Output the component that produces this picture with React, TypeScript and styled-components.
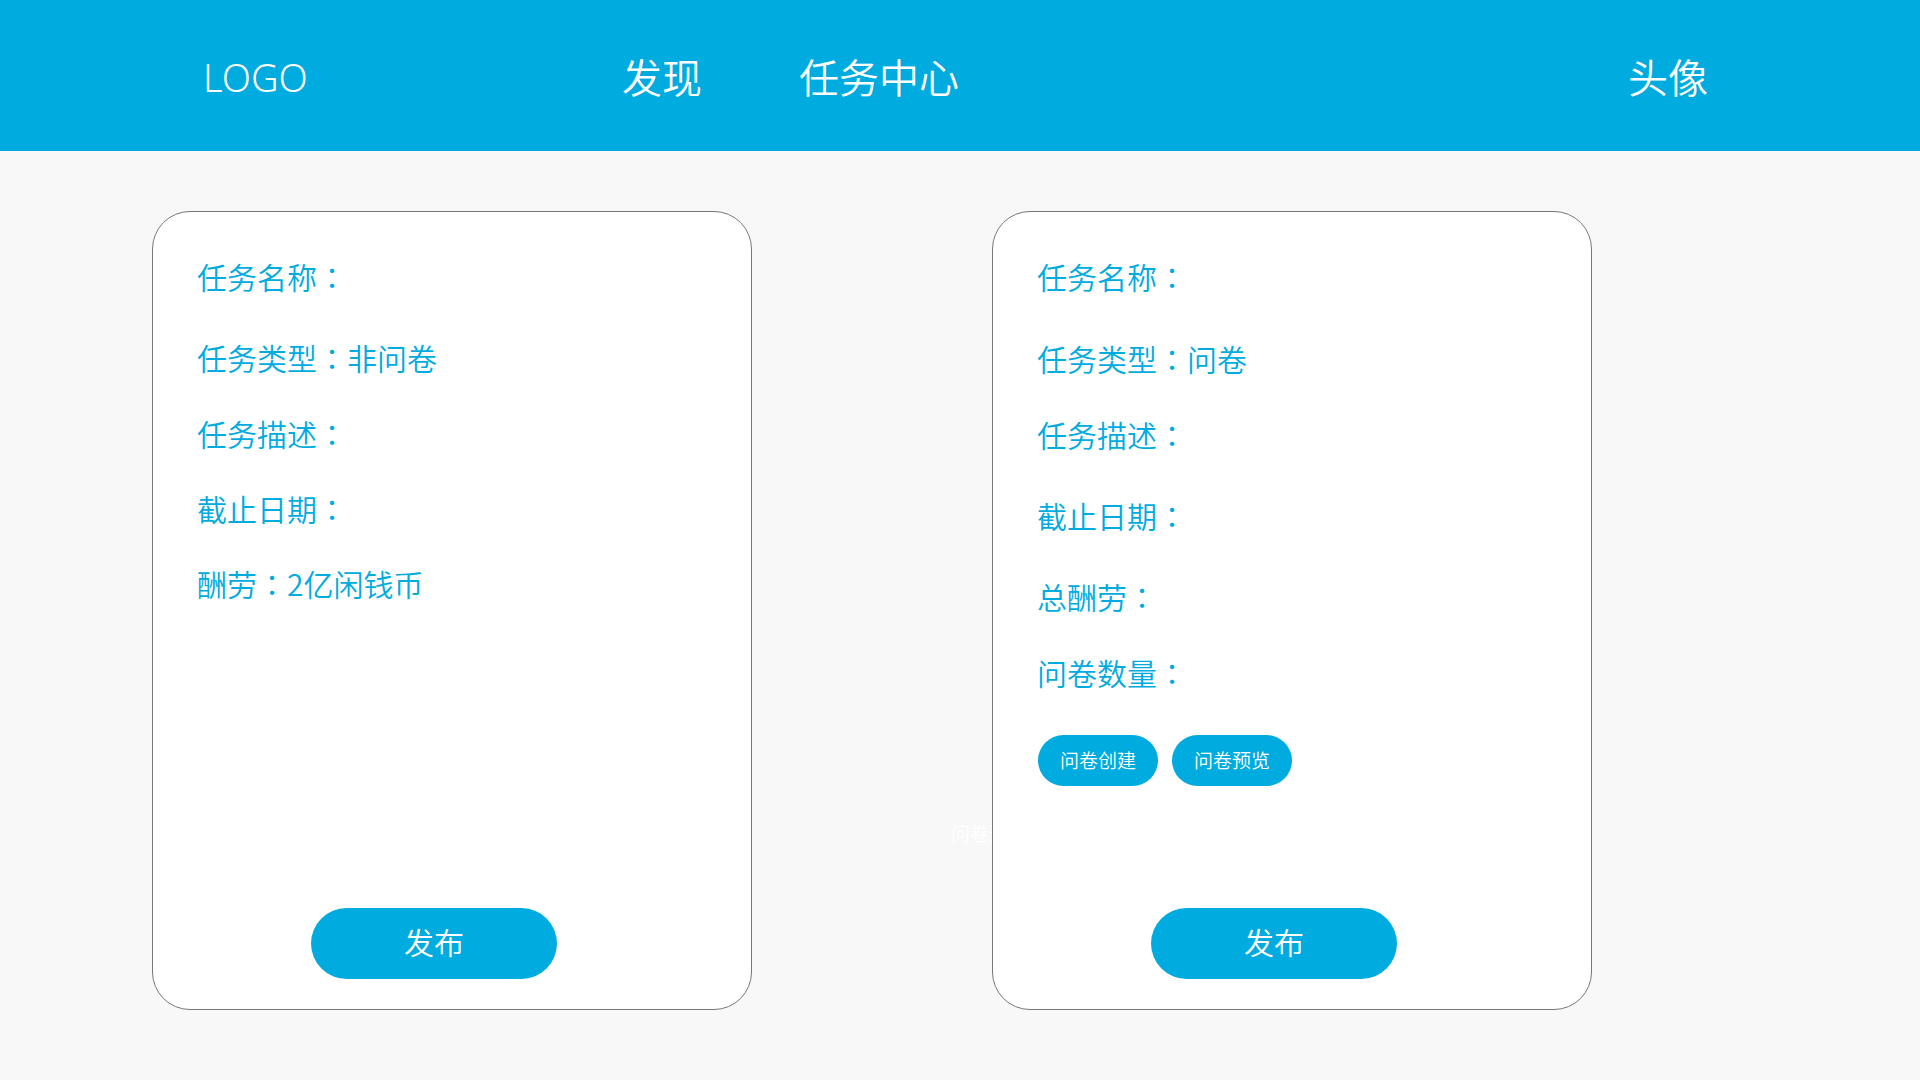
import styled, { createGlobalStyle } from "styled-components";

const GlobalStyle = createGlobalStyle`
  html, body {
    margin: 0;
    padding: 0;
    background: #f8f8f8;
  }
  body {
    font-family: "Noto Sans", "Noto Sans CJK SC", sans-serif;
  }
`;

const BLUE = "#00abdf";

interface Field {
  label: string;
  value?: string;
  mt: number;
}

const leftFields: Field[] = [
  { label: "任务名称", mt: 0 },
  { label: "任务类型", value: "非问卷", mt: 41 },
  { label: "任务描述", mt: 36 },
  { label: "截止日期", mt: 35 },
  { label: "酬劳", value: "2亿闲钱币", mt: 35 },
];

const rightFields: Field[] = [
  { label: "任务名称", mt: 0 },
  { label: "任务类型", value: "问卷", mt: 42 },
  { label: "任务描述", mt: 36 },
  { label: "截止日期", mt: 41 },
  { label: "总酬劳", mt: 41 },
  { label: "问卷数量", mt: 36 },
];

function TaskCard({ fields, survey }: { fields: Field[]; survey?: boolean }) {
  return (
    <Card>
      {fields.map((f) => (
        <Row key={f.label} $mt={f.mt}>
          {f.label}
          <Colon>：</Colon>
          {f.value}
        </Row>
      ))}
      {survey && (
        <SmallActions>
          <SmallButton>问卷创建</SmallButton>
          <SmallButton>问卷预览</SmallButton>
        </SmallActions>
      )}
      <PublishButton>发布</PublishButton>
    </Card>
  );
}

export default function App() {
  return (
    <>
      <GlobalStyle />
      <Header>
        <Logo>LOGO</Logo>
        <Nav>
          <NavItem>发现</NavItem>
          <NavItem>任务中心</NavItem>
        </Nav>
        <Avatar>头像</Avatar>
      </Header>
      <Main>
        <TaskCard fields={leftFields} />
        <TaskCard fields={rightFields} survey />
        <GhostText>问卷预览</GhostText>
      </Main>
    </>
  );
}

const Header = styled.header`
  height: 151px;
  background: ${BLUE};
  display: flex;
  align-items: center;
  padding: 0 212px 0 203px;
  color: #fff;
`;

const Logo = styled.div`
  width: 419px;
  font-size: 38px;
  line-height: 50px;
  font-weight: 300;
  padding-top: 2px;
`;

const Nav = styled.nav`
  display: flex;
  gap: 97px;
`;

const NavItem = styled.a`
  font-family: "Noto Sans CJK SC", sans-serif;
  font-weight: 350;
  font-size: 40px;
  line-height: 50px;
  color: #fff;
  cursor: pointer;
`;

const Avatar = styled.div`
  margin-left: auto;
  font-family: "Noto Sans CJK SC", sans-serif;
  font-weight: 350;
  font-size: 40px;
  line-height: 50px;
`;

const Main = styled.main`
  position: relative;
  display: flex;
  gap: 240px;
  padding: 60px 0 0 152px;
`;

const Card = styled.section`
  position: relative;
  z-index: 1;
  box-sizing: border-box;
  width: 600px;
  height: 799px;
  background: #fff;
  border: 1px solid #777;
  border-radius: 38px;
  padding: 44px 0 30px 44px;
  display: flex;
  flex-direction: column;
  align-items: flex-start;
`;

const Row = styled.div<{ $mt: number }>`
  margin-top: ${(p) => p.$mt}px;
  font-family: "Noto Sans CJK SC", sans-serif;
  font-weight: 350;
  font-size: 30px;
  line-height: 40px;
  color: ${BLUE};
`;

const Colon = styled.span`
  font-family: "Noto Sans CJK JP", sans-serif;
`;

const SmallActions = styled.div`
  display: flex;
  gap: 14px;
  margin-top: 43px;
  margin-left: 1px;
`;

const SmallButton = styled.button`
  width: 120px;
  height: 51px;
  border: none;
  border-radius: 26px;
  background: ${BLUE};
  color: #fff;
  font-family: "Noto Sans CJK SC", sans-serif;
  font-weight: 350;
  font-size: 19px;
  padding: 0 0 2px;
  cursor: pointer;
`;

const PublishButton = styled.button`
  margin-top: auto;
  margin-left: 114px;
  width: 246px;
  height: 71px;
  border: none;
  border-radius: 36px;
  background: ${BLUE};
  color: #fff;
  font-family: "Noto Sans CJK SC", sans-serif;
  font-weight: 350;
  font-size: 30px;
  padding: 0 0 5px;
  cursor: pointer;
`;

const GhostText = styled.span`
  position: absolute;
  left: 951px;
  top: 670px;
  font-family: "Noto Sans CJK SC", sans-serif;
  font-size: 19px;
  line-height: 24px;
  color: #fff;
`;
